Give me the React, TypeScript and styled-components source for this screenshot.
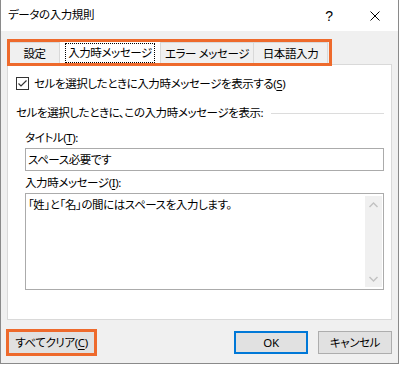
import React from "react";
import styled, { createGlobalStyle } from "styled-components";

const GlobalStyle = createGlobalStyle`
  html, body {
    margin: 0;
    padding: 0;
    background: #ffffff;
  }
  body {
    font-family: "Noto Sans", "Noto Sans CJK JP", sans-serif;
    font-size: 11.5px;
    letter-spacing: -0.4px;
    color: #000;
    font-feature-settings: "palt";
  }
`;

const ORANGE = "#ee6a2c";

const Window = styled.div`
  box-sizing: border-box;
  width: 399px;
  height: 364px;
  border: 1px solid #8a8a8a;
  border-top: none;
  background: #f0f0f0;
  display: flex;
  flex-direction: column;
`;

const TitleBar = styled.div`
  height: 31px;
  background: #fff;
  display: flex;
  align-items: center;
  padding-left: 7px;
`;

const TitleText = styled.div`
  flex: 1;
  line-height: 16px;
  padding-bottom: 1px;
`;

const CaptionButton = styled.div`
  width: 46px;
  height: 31px;
  display: flex;
  align-items: center;
  justify-content: center;
  font-family: "Liberation Sans", sans-serif;
  font-size: 14px;
`;

const Body = styled.div`
  flex: 1;
  display: flex;
  flex-direction: column;
  padding: 8px 6px 0;
`;

const TabStrip = styled.div`
  position: relative;
  z-index: 1;
  box-sizing: border-box;
  width: 325px;
  height: 27px;
  margin-bottom: -2px;
  border: 3px solid ${ORANGE};
  display: flex;
  align-items: flex-end;
`;

const Tab = styled.div<{ $w: number; $active?: boolean }>`
  box-sizing: border-box;
  width: ${(p) => p.$w}px;
  height: 21px;
  display: flex;
  align-items: center;
  justify-content: center;
  background: ${(p) => (p.$active ? "#fff" : "#f0f0f0")};
  border-right: 1px solid #d9d9d9;
  border-top: ${(p) => (p.$active ? "none" : "1px solid #d9d9d9")};
  white-space: nowrap;
`;

const FocusRect = styled.span`
  box-sizing: border-box;
  border: 1px dotted #000;
  padding: 1px 2px 2px;
  line-height: 15px;
`;

const Panel = styled.div`
  box-sizing: border-box;
  height: 256px;
  background: #fff;
  border: 1px solid #d9d9d9;
  display: flex;
  flex-direction: column;
  padding: 12px 7px 0 8px;
`;

const CheckRow = styled.div`
  display: flex;
  align-items: center;
  height: 13px;
  gap: 5px;
`;

const CheckBox = styled.div`
  box-sizing: border-box;
  width: 13px;
  height: 13px;
  border: 1px solid #333;
  background: #fff;
  display: flex;
  align-items: center;
  justify-content: center;
`;

const Label = styled.div<{ $indent?: number; $mt?: number }>`
  line-height: 16px;
  margin-left: ${(p) => p.$indent ?? 0}px;
  margin-top: ${(p) => p.$mt ?? 0}px;
  white-space: nowrap;
`;

const U = styled.span`
  text-decoration: underline;
  text-underline-offset: 2px;
`;

const GroupHeader = styled.div`
  display: flex;
  align-items: center;
  margin-top: 15px;
  line-height: 16px;
  white-space: nowrap;
`;

const GroupLine = styled.div`
  flex: 1;
  height: 1px;
  background: #dcdcdc;
  margin-left: 8px;
`;

const Field = styled.div<{ $h: number; $mt: number }>`
  box-sizing: border-box;
  margin: ${(p) => p.$mt}px 0 0 9px;
  height: ${(p) => p.$h}px;
  border: 1px solid #ababab;
  background: #fff;
  display: flex;
  line-height: 16px;
`;

const FieldText = styled.div`
  flex: 1;
  padding: 3px 2px;
  white-space: nowrap;
`;

const ScrollBar = styled.div`
  width: 17px;
  margin: 2px 1px 2px 0;
  background: #f0f0f0;
  display: flex;
  flex-direction: column;
  justify-content: space-between;
  align-items: center;
`;

const Arrow = styled.div`
  height: 17px;
  display: flex;
  align-items: center;
  justify-content: center;
`;

const ButtonRow = styled.div`
  display: flex;
  align-items: center;
  margin-top: 9px;
`;

const Button = styled.div<{ $w: number; $variant?: "default" | "mark" }>`
  box-sizing: border-box;
  width: ${(p) => p.$w}px;
  height: ${(p) => (p.$variant === "mark" ? 27 : 23)}px;
  background: #e1e1e1;
  border: ${(p) =>
    p.$variant === "default"
      ? "2px solid #0078d7"
      : p.$variant === "mark"
      ? `3px solid ${ORANGE}`
      : "1px solid #adadad"};
  display: flex;
  align-items: center;
  justify-content: center;
  line-height: 16px;
  white-space: nowrap;
`;

const Spacer = styled.div`
  flex: 1;
`;

const Chevron = ({ up }: { up?: boolean }) => (
  <svg width="9" height="6" viewBox="0 0 9 6">
    <path
      d={up ? "M0.5 5 L4.5 1 L8.5 5" : "M0.5 1 L4.5 5 L8.5 1"}
      fill="none"
      stroke="#c2c2c2"
      strokeWidth="1.4"
    />
  </svg>
);

export default function App() {
  return (
    <>
      <GlobalStyle />
      <Window>
        <TitleBar>
          <TitleText>データの入力規則</TitleText>
          <CaptionButton>?</CaptionButton>
          <CaptionButton>
            <svg width="10" height="10" viewBox="0 0 10 10">
              <path d="M0.5 0.5 L9.5 9.5 M9.5 0.5 L0.5 9.5" stroke="#000" strokeWidth="1" />
            </svg>
          </CaptionButton>
        </TitleBar>
        <Body>
          <TabStrip>
            <Tab $w={50}>設定</Tab>
            <Tab $w={101} $active>
              <FocusRect>入力時メッセージ</FocusRect>
            </Tab>
            <Tab $w={93}>エラー メッセージ</Tab>
            <Tab $w={74}>日本語入力</Tab>
          </TabStrip>
          <Panel>
            <CheckRow>
              <CheckBox>
                <svg width="11" height="11" viewBox="0 0 11 11">
                  <path d="M1.5 5.5 L4 8 L9.5 2.5" fill="none" stroke="#333" strokeWidth="1.2" />
                </svg>
              </CheckBox>
              <Label>
                セルを選択したときに入力時メッセージを表示する(<U>S</U>)
              </Label>
            </CheckRow>
            <GroupHeader>
              セルを選択したときに、この入力時メッセージを表示:
              <GroupLine />
            </GroupHeader>
            <Label $indent={9} $mt={9}>
              タイトル(<U>T</U>):
            </Label>
            <Field $h={23} $mt={2}>
              <FieldText>スペース必要です</FieldText>
            </Field>
            <Label $indent={9} $mt={4}>
              入力時メッセージ(<U>I</U>):
            </Label>
            <Field $h={97} $mt={2}>
              <FieldText>「姓」と「名」の間にはスペースを入力します。</FieldText>
              <ScrollBar>
                <Arrow>
                  <Chevron up />
                </Arrow>
                <Arrow>
                  <Chevron />
                </Arrow>
              </ScrollBar>
            </Field>
          </Panel>
          <ButtonRow>
            <Button $w={91} $variant="mark" style={{ marginLeft: -1 }}>
              すべてクリア(<U>C</U>)
            </Button>
            <Spacer />
            <Button $w={74} $variant="default">
              OK
            </Button>
            <Button $w={74} style={{ marginLeft: 10 }}>
              キャンセル
            </Button>
          </ButtonRow>
        </Body>
      </Window>
    </>
  );
}
